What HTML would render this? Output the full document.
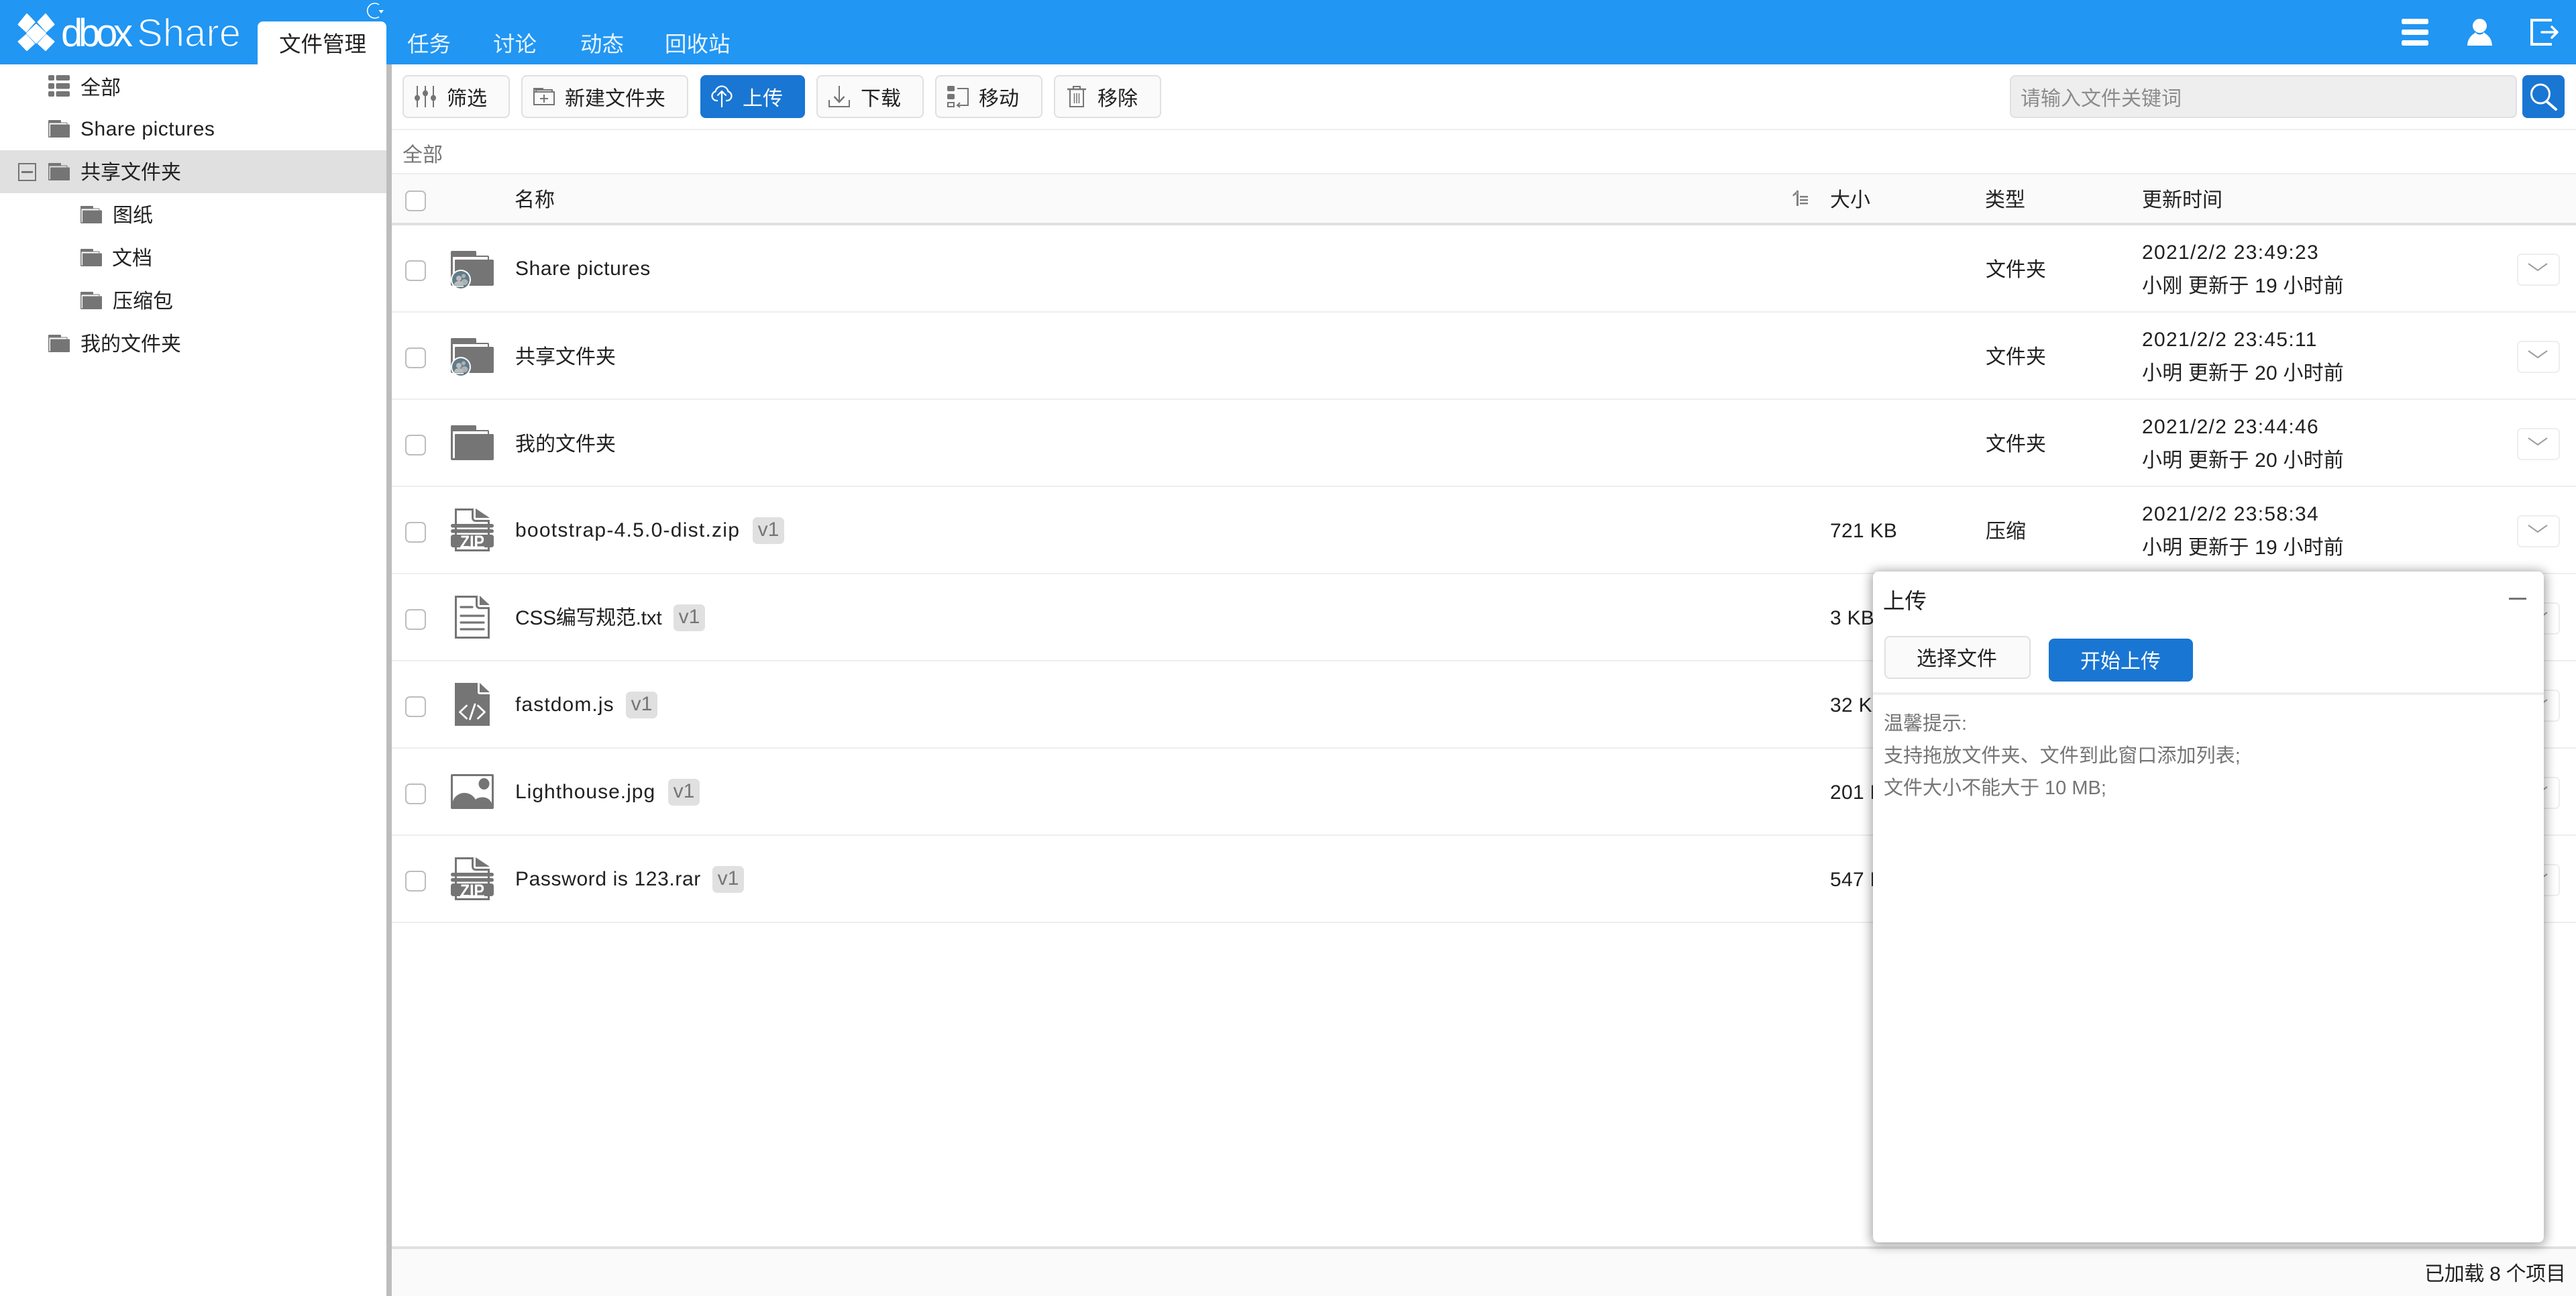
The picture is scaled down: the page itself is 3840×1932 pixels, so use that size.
<!DOCTYPE html>
<html lang="zh-CN">
<head>
<meta charset="utf-8">
<title>dboxShare</title>
<style>
html,body{margin:0;padding:0;width:3840px;height:1932px;overflow:hidden;background:#fff}
body{position:relative;font-family:"Liberation Sans","Noto Sans CJK SC",sans-serif;font-size:30px;color:#212121}
div,span,svg{position:absolute;box-sizing:border-box}
.t{white-space:nowrap;line-height:40px;height:40px}
svg{overflow:visible;display:block}
#head{left:0;top:0;width:3840px;height:96px;background:#2196f3}
#tab{left:384px;top:32px;width:192px;height:64px;background:#fff;border-radius:8px 8px 0 0}
.nav{font-size:32.5px;top:46px;color:#e8f4fe}
#split{left:576px;top:96px;width:8px;height:1836px;background:#bdbdbd}
#sel{left:0;top:224px;width:576px;height:64px;background:#e0e0e0}
.btn{top:112px;height:64px;background:#fafafa;border:2.5px solid #e0e0e0;border-radius:8px}
.blue{background:#1976d2;border:0;border-radius:8px}
.hl{left:584px;width:3256px;height:2px;background:#eee}
.cb{width:31px;height:31px;border:2.5px solid #bdbdbd;border-radius:7px;background:#fff}
.row{left:584px;width:3256px;height:130px;border-bottom:2px solid #eee}
.row .cb{left:20px;top:52px}
.row .n{left:184px;top:45px}
.row .c{top:47px}
.row .s{left:2144px;top:46px;letter-spacing:.3px}
.row .y{left:2376px;top:47px}
.row .d1{left:2609px;top:21px;letter-spacing:1.3px}
.row .d2{left:2609px;top:71px;letter-spacing:.2px}
.dd{left:3168px;top:42px;width:64px;height:48px;border:2.5px solid #eee;border-radius:7px;background:#fff}
.v{top:45px;height:40px;width:47px;background:#e0e0e0;border-radius:7px;color:#757575;text-align:center;line-height:38px;font-size:30px}
.side{color:#212121}
.hint{left:2808px;color:#757575;font-size:29px}
</style>
</head>
<body>

<div id="head"></div>
<!-- logo -->
<svg style="left:0;top:0" width="400" height="96" viewBox="0 0 400 96">
  <g fill="#fff" stroke="#fff" stroke-width="2" stroke-linejoin="round">
    <polygon points="40,21 51.500,33 39,47 27.500,36.500"/>
    <polygon points="68,21 56.500,33 69,47 80.500,36.500"/>
    <polygon points="54,36.500 68,49.500 54,64 40,49.500"/>
    <polygon points="27.500,62 39,52 51,65 40,75"/>
    <polygon points="80.500,62 69,52 57,65 68,75"/>
  </g>
  <text x="91" y="69" font-family="Liberation Sans" font-size="58" fill="#fff" textLength="107" lengthAdjust="spacing">dbox</text>
  <text x="204" y="69" font-family="Liberation Sans" font-size="58" fill="#fff" stroke="#2196f3" stroke-width="1.6" textLength="155" lengthAdjust="spacing">Share</text>
</svg>
<svg style="left:548px;top:5px" width="24" height="22" viewBox="0 0 24 22" fill="none">
  <path d="M17 2A11 11 0 1 0 17 20" stroke="#fff" stroke-width="1.6"/>
  <path d="M16.500 10h7.500l-3.700 5z" fill="#fff"/>
</svg>
<div id="tab"></div>
<div class="t" style="left:416px;top:46px;font-size:32.5px">文件管理</div>
<div class="t nav" style="left:607px">任务</div>
<div class="t nav" style="left:735px">讨论</div>
<div class="t nav" style="left:865px">动态</div>
<div class="t nav" style="left:991px">回收站</div>
<!-- header right icons -->
<svg style="left:3580px;top:28px" width="40" height="40" viewBox="0 0 40 40" fill="#fff">
  <rect x="0" y="0" width="40" height="8" rx="2.5"/><rect x="0" y="16" width="40" height="8" rx="2.5"/><rect x="0" y="32" width="40" height="8" rx="2.5"/>
</svg>
<svg style="left:3678px;top:28px" width="37" height="40" viewBox="0 0 37 40" fill="#fff">
  <ellipse cx="18.5" cy="10.5" rx="10.5" ry="10.5"/>
  <path d="M12.5 20c1 2 2 3.500 6 3.500s5-1.500 6-3.500c2 2.500 12 6 12.500 20H0c.5-14 10.500-17.500 12.500-20z"/>
</svg>
<svg style="left:3772px;top:28px" width="42" height="40" viewBox="0 0 42 40" fill="none" stroke="#fff" stroke-width="4">
  <path d="M32 2H2v36h30"/>
  <path d="M17 20h22M32 12l8 8-8 8" stroke-width="3.500" stroke-linecap="round" stroke-linejoin="round"/>
</svg>

<!-- sidebar -->
<div id="split"></div>
<div id="sel"></div>
<svg style="left:72px;top:112px" width="32" height="32" viewBox="0 0 32 32" fill="#757575">
  <rect x="0" y="0" width="9" height="8" rx="2"/><rect x="11.500" y="0" width="20.500" height="8" rx="2"/>
  <rect x="0" y="12" width="9" height="8.500" rx="2"/><rect x="11.500" y="12" width="20.500" height="8.500" rx="2"/>
  <rect x="0" y="24" width="9" height="8" rx="2"/><rect x="11.500" y="24" width="20.500" height="8" rx="2"/>
</svg>
<div class="t side" style="left:120px;top:112px">全部</div>

<svg style="left:72px;top:179px" width="32" height="26" viewBox="0 0 64 52"><path fill="#757575" d="M2 0h34a2 2 0 0 1 2 2v5h17a2 2 0 0 1 2 2v4h5a2 2 0 0 1 2 2v35a2 2 0 0 1-2 2H2a2 2 0 0 1-2-2V2a2 2 0 0 1 2-2z"/><path fill="#fff" d="M3 9h52v4H7a1 1 0 0 0-1 1v35H3z"/></svg>
<div class="t side" style="left:120px;top:173px;letter-spacing:.5px">Share pictures</div>

<div style="left:27px;top:243px;width:27px;height:27px;border:2.5px solid #757575"></div>
<div style="left:32px;top:255px;width:17px;height:3px;background:#757575"></div>
<svg style="left:72px;top:243px" width="32" height="26" viewBox="0 0 64 52"><path fill="#757575" d="M2 0h34a2 2 0 0 1 2 2v5h17a2 2 0 0 1 2 2v4h5a2 2 0 0 1 2 2v35a2 2 0 0 1-2 2H2a2 2 0 0 1-2-2V2a2 2 0 0 1 2-2z"/><path fill="#e0e0e0" d="M3 9h52v4H7a1 1 0 0 0-1 1v35H3z"/></svg>
<div class="t side" style="left:120px;top:238px">共享文件夹</div>

<svg style="left:120px;top:307px" width="32" height="26" viewBox="0 0 64 52"><path fill="#757575" d="M2 0h34a2 2 0 0 1 2 2v5h17a2 2 0 0 1 2 2v4h5a2 2 0 0 1 2 2v35a2 2 0 0 1-2 2H2a2 2 0 0 1-2-2V2a2 2 0 0 1 2-2z"/><path fill="#fff" d="M3 9h52v4H7a1 1 0 0 0-1 1v35H3z"/></svg>
<div class="t side" style="left:168px;top:302px">图纸</div>

<svg style="left:120px;top:371px" width="32" height="26" viewBox="0 0 64 52"><path fill="#757575" d="M2 0h34a2 2 0 0 1 2 2v5h17a2 2 0 0 1 2 2v4h5a2 2 0 0 1 2 2v35a2 2 0 0 1-2 2H2a2 2 0 0 1-2-2V2a2 2 0 0 1 2-2z"/><path fill="#fff" d="M3 9h52v4H7a1 1 0 0 0-1 1v35H3z"/></svg>
<div class="t side" style="left:167px;top:366px">文档</div>

<svg style="left:120px;top:435px" width="32" height="26" viewBox="0 0 64 52"><path fill="#757575" d="M2 0h34a2 2 0 0 1 2 2v5h17a2 2 0 0 1 2 2v4h5a2 2 0 0 1 2 2v35a2 2 0 0 1-2 2H2a2 2 0 0 1-2-2V2a2 2 0 0 1 2-2z"/><path fill="#fff" d="M3 9h52v4H7a1 1 0 0 0-1 1v35H3z"/></svg>
<div class="t side" style="left:168px;top:430px">压缩包</div>

<svg style="left:72px;top:499px" width="32" height="26" viewBox="0 0 64 52"><path fill="#757575" d="M2 0h34a2 2 0 0 1 2 2v5h17a2 2 0 0 1 2 2v4h5a2 2 0 0 1 2 2v35a2 2 0 0 1-2 2H2a2 2 0 0 1-2-2V2a2 2 0 0 1 2-2z"/><path fill="#fff" d="M3 9h52v4H7a1 1 0 0 0-1 1v35H3z"/></svg>
<div class="t side" style="left:120px;top:494px">我的文件夹</div>

<!-- toolbar -->
<div class="btn" style="left:600px;width:160px"></div>
<svg style="left:618px;top:128px" width="32" height="32" viewBox="0 0 32 32" fill="#757575">
  <rect x="3" y="0" width="2" height="32"/><rect x="15" y="0" width="2" height="32"/><rect x="27" y="0" width="2" height="32"/>
  <ellipse cx="4" cy="18" rx="4" ry="4.500"/><ellipse cx="16" cy="11" rx="4" ry="4.500"/><ellipse cx="28" cy="18" rx="4" ry="4.500"/>
</svg>
<div class="t" style="left:666px;top:128px">筛选</div>

<div class="btn" style="left:777px;width:249px"></div>
<svg style="left:795px;top:131px" width="32" height="26" viewBox="0 0 32 26" fill="none" stroke="#757575" stroke-width="2">
  <path d="M0 0h15v3H0z" fill="#757575" stroke="none"/>
  <path d="M1 3v22h30V6H1"/><path d="M4 6V3h24v3"/>
  <path d="M16 10v12M10 16h12"/>
</svg>
<div class="t" style="left:842px;top:128px">新建文件夹</div>

<div class="blue" style="left:1044px;top:112px;width:156px;height:64px"></div>
<svg style="left:1060px;top:128px" width="32" height="32" viewBox="0 0 32 32" fill="none" stroke="#fff" stroke-width="2.200">
  <path d="M10 22H8A7 7 0 0 1 6.500 8.300 9.700 9.700 0 0 1 25.500 8.300 7 7 0 0 1 24 22h-2"/>
  <path d="M16 32V8M9.500 14.500 16 8l6.500 6.500"/>
</svg>
<div class="t" style="left:1107px;top:128px;color:#fff">上传</div>

<div class="btn" style="left:1217px;width:160px"></div>
<svg style="left:1235px;top:128px" width="32" height="32" viewBox="0 0 32 32" fill="none" stroke="#757575" stroke-width="2">
  <path d="M16 0v22"/><path d="M8.500 16 16 24l7.500-8" stroke-width="2.500"/><path d="M1 21v10h30V21"/>
</svg>
<div class="t" style="left:1283px;top:128px">下载</div>

<div class="btn" style="left:1394px;width:160px"></div>
<svg style="left:1412px;top:128px" width="32" height="32" viewBox="0 0 32 32" fill="none" stroke="#757575" stroke-width="2">
  <rect x="0" y="0" width="11" height="8" rx="2" fill="#757575" stroke="none"/>
  <rect x="0" y="12" width="11" height="8" rx="2" fill="#757575" stroke="none"/>
  <rect x="1" y="25" width="9" height="6" />
  <path d="M15 4h16v25H15"/><path d="M19 25l-4 4 4 3"/>
</svg>
<div class="t" style="left:1459px;top:128px">移动</div>

<div class="btn" style="left:1571px;width:160px"></div>
<svg style="left:1591px;top:128px" width="28" height="32" viewBox="0 0 28 32" fill="none" stroke="#757575" stroke-width="2">
  <path d="M0 5h28" stroke-width="2.500"/><path d="M9 5V1h10v4"/><path d="M4 5v26h20V5"/>
  <path d="M10.500 11v15M14 11v15M17.500 11v15" stroke-width="1.500"/>
</svg>
<div class="t" style="left:1636px;top:128px">移除</div>

<div style="left:2996px;top:112px;width:756px;height:64px;background:#eee;border:2.5px solid #e0e0e0;border-radius:8px"></div>
<div class="t" style="left:3012px;top:128px;color:#8c8c8c">请输入文件关键词</div>
<div class="blue" style="left:3760px;top:112px;width:63px;height:64px"></div>
<svg style="left:3772px;top:125px" width="40" height="40" viewBox="0 0 40 40" fill="none" stroke="#fff" stroke-width="3">
  <ellipse cx="15" cy="15" rx="13.500" ry="14"/><path d="M24 26 38 38" stroke-width="4" stroke-linecap="round"/>
</svg>

<div class="hl" style="top:192px"></div>
<div class="t" style="left:600px;top:212px;color:#757575">全部</div>
<div class="hl" style="top:258px"></div>

<!-- table head -->
<div style="left:584px;top:260px;width:3256px;height:72px;background:#fafafa"></div>
<div style="left:584px;top:332px;width:3256px;height:4px;background:#e0e0e0"></div>
<div class="cb" style="left:604px;top:284px"></div>
<div class="t" style="left:767px;top:279px">名称</div>
<svg style="left:2672px;top:284px" width="24" height="24" viewBox="0 0 24 24" fill="#808080">
  <path d="M6 0h3v23H6zM6 1 0 7l1 1.500L7 5z"/><path d="M11 8h12v2.500H11zM11 13h12v2.500H11zM11 18h12v2.500H11z"/>
</svg>
<div class="t" style="left:2728px;top:279px">大小</div>
<div class="t" style="left:2959px;top:279px">类型</div>
<div class="t" style="left:3193px;top:279px">更新时间</div>

<!-- rows -->
<div class="row" style="top:336px">
  <div class="cb"></div>
  <svg style="left:88px;top:38px" width="64" height="58" viewBox="0 0 64 58"><path fill="#757575" d="M2 0h34a2 2 0 0 1 2 2v5h17a2 2 0 0 1 2 2v4h5a2 2 0 0 1 2 2v35a2 2 0 0 1-2 2H2a2 2 0 0 1-2-2V2a2 2 0 0 1 2-2z"/><path fill="#fff" d="M3 9h52v4H7a1 1 0 0 0-1 1v35H3z"/><circle cx="15" cy="43" r="15" fill="#fff"/><circle cx="15" cy="43" r="13" fill="#607d8b"/><circle cx="19" cy="37.500" r="3" fill="#b0b0b0"/><ellipse cx="20.500" cy="46.500" rx="5" ry="4.500" fill="#b0b0b0"/><circle cx="12" cy="41" r="4" fill="#bdbdbd"/><path d="M5 51.500c0-5 3.500-6.500 7-6.500s7 1.500 7 6.500z" fill="#bdbdbd"/><rect x="6" y="52" width="13" height="1.500" fill="#fff"/></svg>
  <div class="t n" style="letter-spacing:.6px">Share pictures</div>
  <div class="t y">文件夹</div>
  <div class="t d1">2021/2/2 23:49:23</div>
  <div class="t d2">小刚 更新于 19 小时前</div>
  <div class="dd"><svg style="left:14px;top:12px" width="30" height="12" viewBox="0 0 30 12" fill="none" stroke="#9e9e9e" stroke-width="2"><path d="M1 1l14 10L29 1"/></svg></div>
</div>
<div class="row" style="top:466px">
  <div class="cb"></div>
  <svg style="left:88px;top:38px" width="64" height="58" viewBox="0 0 64 58"><path fill="#757575" d="M2 0h34a2 2 0 0 1 2 2v5h17a2 2 0 0 1 2 2v4h5a2 2 0 0 1 2 2v35a2 2 0 0 1-2 2H2a2 2 0 0 1-2-2V2a2 2 0 0 1 2-2z"/><path fill="#fff" d="M3 9h52v4H7a1 1 0 0 0-1 1v35H3z"/><circle cx="15" cy="43" r="15" fill="#fff"/><circle cx="15" cy="43" r="13" fill="#607d8b"/><circle cx="19" cy="37.500" r="3" fill="#b0b0b0"/><ellipse cx="20.500" cy="46.500" rx="5" ry="4.500" fill="#b0b0b0"/><circle cx="12" cy="41" r="4" fill="#bdbdbd"/><path d="M5 51.500c0-5 3.500-6.500 7-6.500s7 1.500 7 6.500z" fill="#bdbdbd"/><rect x="6" y="52" width="13" height="1.500" fill="#fff"/></svg>
  <div class="t n c">共享文件夹</div>
  <div class="t y">文件夹</div>
  <div class="t d1">2021/2/2 23:45:11</div>
  <div class="t d2">小明 更新于 20 小时前</div>
  <div class="dd"><svg style="left:14px;top:12px" width="30" height="12" viewBox="0 0 30 12" fill="none" stroke="#9e9e9e" stroke-width="2"><path d="M1 1l14 10L29 1"/></svg></div>
</div>
<div class="row" style="top:596px">
  <div class="cb"></div>
  <svg style="left:88px;top:38px" width="64" height="52" viewBox="0 0 64 52"><path fill="#757575" d="M2 0h34a2 2 0 0 1 2 2v5h17a2 2 0 0 1 2 2v4h5a2 2 0 0 1 2 2v35a2 2 0 0 1-2 2H2a2 2 0 0 1-2-2V2a2 2 0 0 1 2-2z"/><path fill="#fff" d="M3 9h52v4H7a1 1 0 0 0-1 1v35H3z"/></svg>
  <div class="t n c">我的文件夹</div>
  <div class="t y">文件夹</div>
  <div class="t d1">2021/2/2 23:44:46</div>
  <div class="t d2">小明 更新于 20 小时前</div>
  <div class="dd"><svg style="left:14px;top:12px" width="30" height="12" viewBox="0 0 30 12" fill="none" stroke="#9e9e9e" stroke-width="2"><path d="M1 1l14 10L29 1"/></svg></div>
</div>
<div class="row" style="top:726px">
  <div class="cb"></div>
  <svg style="left:88px;top:32px" width="64" height="64" viewBox="0 0 64 64"><path fill="#757575" d="M6 0h28v14a3 3 0 0 0 3 3h21v47H6z"/><path fill="#757575" d="M37 0l21 14H37z"/><path fill="#fff" d="M9 3h22v11a6 6 0 0 0 6 6h18v41H9z"/><rect x="0" y="23" width="64" height="5.500" rx="2.700" fill="#757575"/><rect x="0" y="31" width="64" height="5.500" rx="2.700" fill="#757575"/><rect x="0" y="39" width="64" height="19" rx="3.500" fill="#757575"/><rect x="14" y="56.500" width="36" height="3" fill="#fff"/><text x="32" y="59" text-anchor="middle" font-family="Liberation Sans" font-weight="700" font-size="27" fill="#fff" textLength="36" lengthAdjust="spacingAndGlyphs">ZIP</text></svg>
  <div class="t n" style="letter-spacing:1.25px">bootstrap-4.5.0-dist.zip</div>
  <div class="v" style="left:538px">v1</div>
  <div class="t s">721 KB</div>
  <div class="t y">压缩</div>
  <div class="t d1">2021/2/2 23:58:34</div>
  <div class="t d2">小明 更新于 19 小时前</div>
  <div class="dd"><svg style="left:14px;top:12px" width="30" height="12" viewBox="0 0 30 12" fill="none" stroke="#9e9e9e" stroke-width="2"><path d="M1 1l14 10L29 1"/></svg></div>
</div>
<div class="row" style="top:856px">
  <div class="cb"></div>
  <svg style="left:94px;top:32px" width="52" height="64" viewBox="0 0 52 64"><path fill="#757575" d="M0 0h34v14a3 3 0 0 0 3 3h15v47H0z"/><path fill="#757575" d="M37 0l15 14H37z"/><path fill="#fff" d="M3 3h28v11a6 6 0 0 0 6 6h12v41H3z"/><g stroke="#757575" stroke-width="3.200" stroke-linecap="round"><path d="M9 17h17M9 30h34M9 40h34M9 50h34"/></g></svg>
  <div class="t n" style="letter-spacing:-.3px;top:46px">CSS编写规范.txt</div>
  <div class="v" style="left:420px">v1</div>
  <div class="t s">3 KB</div>
  <div class="t y">文本</div>
  <div class="t d1">2021/2/2 23:58:20</div>
  <div class="t d2">小明 更新于 19 小时前</div>
  <div class="dd"><svg style="left:14px;top:12px" width="30" height="12" viewBox="0 0 30 12" fill="none" stroke="#9e9e9e" stroke-width="2"><path d="M1 1l14 10L29 1"/></svg></div>
</div>
<div class="row" style="top:986px">
  <div class="cb"></div>
  <svg style="left:94px;top:32px" width="52" height="64" viewBox="0 0 52 64"><path fill="#757575" d="M0 0h34v14a3 3 0 0 0 3 3h15v47H0z"/><path fill="#757575" d="M37 0l15 14H37z"/><g fill="none" stroke="#fff" stroke-width="2.800" stroke-linecap="round" stroke-linejoin="round"><path d="M17.500 34l-10 9.500 10 9.500M34.500 34l10 9.500-10 9.500M30 32l-7.500 22"/></g></svg>
  <div class="t n" style="letter-spacing:1.1px">fastdom.js</div>
  <div class="v" style="left:349px">v1</div>
  <div class="t s">32 KB</div>
  <div class="t y">脚本</div>
  <div class="t d1">2021/2/2 23:58:10</div>
  <div class="t d2">小明 更新于 19 小时前</div>
  <div class="dd"><svg style="left:14px;top:12px" width="30" height="12" viewBox="0 0 30 12" fill="none" stroke="#9e9e9e" stroke-width="2"><path d="M1 1l14 10L29 1"/></svg></div>
</div>
<div class="row" style="top:1116px">
  <div class="cb"></div>
  <svg style="left:88px;top:38px" width="64" height="52" viewBox="0 0 64 52"><rect x="0" y="0" width="64" height="52" rx="2" fill="#757575"/><rect x="3" y="3" width="58" height="46" fill="#fff"/><ellipse cx="49.500" cy="14.500" rx="8" ry="8.500" fill="#757575"/><path fill="#757575" d="M3 49V41C5 33 13 28 20 28s13 3 17 10c2-2.500 6-3.500 11-3.500s11 3 13 9v5.500z"/></svg>
  <div class="t n" style="letter-spacing:1px">Lighthouse.jpg</div>
  <div class="v" style="left:412px">v1</div>
  <div class="t s">201 KB</div>
  <div class="t y">图片</div>
  <div class="t d1">2021/2/2 23:58:00</div>
  <div class="t d2">小明 更新于 19 小时前</div>
  <div class="dd"><svg style="left:14px;top:12px" width="30" height="12" viewBox="0 0 30 12" fill="none" stroke="#9e9e9e" stroke-width="2"><path d="M1 1l14 10L29 1"/></svg></div>
</div>
<div class="row" style="top:1246px">
  <div class="cb"></div>
  <svg style="left:88px;top:32px" width="64" height="64" viewBox="0 0 64 64"><path fill="#757575" d="M6 0h28v14a3 3 0 0 0 3 3h21v47H6z"/><path fill="#757575" d="M37 0l21 14H37z"/><path fill="#fff" d="M9 3h22v11a6 6 0 0 0 6 6h18v41H9z"/><rect x="0" y="23" width="64" height="5.500" rx="2.700" fill="#757575"/><rect x="0" y="31" width="64" height="5.500" rx="2.700" fill="#757575"/><rect x="0" y="39" width="64" height="19" rx="3.500" fill="#757575"/><rect x="14" y="56.500" width="36" height="3" fill="#fff"/><text x="32" y="59" text-anchor="middle" font-family="Liberation Sans" font-weight="700" font-size="27" fill="#fff" textLength="36" lengthAdjust="spacingAndGlyphs">ZIP</text></svg>
  <div class="t n" style="letter-spacing:.62px">Password is 123.rar</div>
  <div class="v" style="left:478px">v1</div>
  <div class="t s">547 KB</div>
  <div class="t y">压缩</div>
  <div class="t d1">2021/2/2 23:57:50</div>
  <div class="t d2">小明 更新于 19 小时前</div>
  <div class="dd"><svg style="left:14px;top:12px" width="30" height="12" viewBox="0 0 30 12" fill="none" stroke="#9e9e9e" stroke-width="2"><path d="M1 1l14 10L29 1"/></svg></div>
</div>

<!-- footer -->
<div style="left:584px;top:1858px;width:3256px;height:4px;background:#e0e0e0"></div>
<div style="left:584px;top:1862px;width:3256px;height:70px;background:#fafafa"></div>
<div class="t" style="left:3614px;top:1880px;letter-spacing:-.3px">已加载 8 个项目</div>

<!-- upload dialog -->
<div style="left:2792px;top:852px;width:1000px;height:1000px;background:#fff;border-radius:8px;box-shadow:0 2px 16px 3px rgba(0,0,0,.36)"></div>
<div class="t" style="left:2807px;top:876px;font-size:32.5px">上传</div>
<div style="left:3740px;top:891px;width:26px;height:3px;background:#757575"></div>
<div class="btn" style="left:2809px;top:948px;width:218px"></div>
<div class="t" style="left:2857px;top:963px">选择文件</div>
<div class="blue" style="left:3054px;top:952px;width:215px;height:64px"></div>
<div class="t" style="left:3101px;top:967px;color:#fff">开始上传</div>
<div style="left:2792px;top:1032px;width:1000px;height:4px;background:#eee"></div>
<div class="t hint" style="top:1059px">温馨提示:</div>
<div class="t hint" style="top:1107px;letter-spacing:.1px">支持拖放文件夹、文件到此窗口添加列表;</div>
<div class="t hint" style="top:1155px">文件大小不能大于 10 MB;</div>

</body>
</html>
